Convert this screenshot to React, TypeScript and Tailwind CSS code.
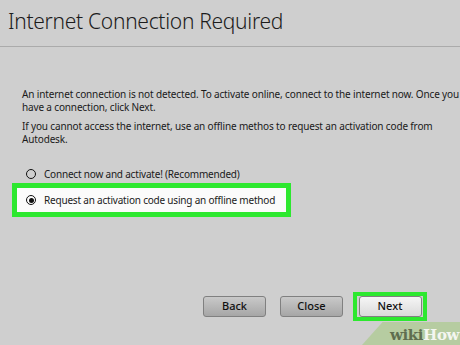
import React from 'react';

const Radio = ({ checked }: { checked?: boolean }) => (
  <span className="w-[10px] h-[10px] rounded-full border-[1.5px] border-[#111] flex items-center justify-center shrink-0">
    {checked && <span className="w-[5px] h-[5px] rounded-full bg-[#111]" />}
  </span>
);

const Button = ({ label, primary }: { label: string; primary?: boolean }) => (
  <button
    className={
      'w-[63px] h-[21px] rounded-[3px] border border-[#808080] text-[11px] font-medium text-[#111] flex items-center justify-center ' +
      (primary
        ? 'bg-gradient-to-b from-[#f6f6f6] to-[#dadada]'
        : 'bg-gradient-to-b from-[#c9c9c9] to-[#a6a6a6]')
    }
  >
    {label}
  </button>
);

export default function App() {
  return (
    <div className="w-[460px] h-[345px] bg-[#cfcfcf] relative overflow-hidden font-['Noto_Sans',sans-serif] text-[#1a1a1a]">
      <div className="h-[47px] border-b border-[#ababab] pl-[8px] pt-[7px]">
        <h1 className="text-[21px] leading-[28px] font-light tracking-[-0.3px] text-[#1c1c1c]">Internet Connection Required</h1>
      </div>

      <div className="pl-[22px] pt-[41px] text-[10px] leading-[13px] tracking-[-0.15px]">
        <p className="whitespace-nowrap">
          An internet connection is not detected. To activate online, connect to the internet now. Once you
          <br />
          have a connection, click Next.
        </p>
        <p className="whitespace-nowrap mt-[6px]">
          If you cannot access the internet, use an offline methos to request an activation code from
          <br />
          Autodesk.
        </p>
      </div>

      <div className="pl-[12px] pt-[19px] text-[10px] tracking-[-0.2px]">
        <div className="flex items-center gap-[8px] h-[18px] pl-[14px]">
          <Radio />
          <span>Connect now and activate! (Recommended)</span>
        </div>
        <div className="w-[279px] h-[34px] border-[5px] border-[#2de82f] bg-[#fbfbfb] flex items-center gap-[8px] pl-[9px] whitespace-nowrap">
          <Radio checked />
          <span>Request an activation code using an offline method</span>
        </div>
      </div>

      <div className="flex items-center justify-end pr-[33px] pt-[75px]">
        <Button label="Back" />
        <div className="ml-[14px]">
          <Button label="Close" />
        </div>
        <div className="ml-[10px] w-[74px] h-[29px] border-[4px] border-[#2de82f] flex items-center justify-center">
          <Button label="Next" primary />
        </div>
      </div>

      <div className="absolute right-0 bottom-0 w-[98px] h-[23px] bg-[#b6cca1] [clip-path:polygon(21%_0,100%_0,100%_100%,0_100%)] flex items-center justify-end pr-[1px] pt-[3px]">
        <span className="font-['DejaVu_Serif',serif] font-bold text-[15px] leading-none tracking-[-0.4px]">
          <span className="text-[#5f6e4f]">wiki</span>
          <span className="text-[#f4f6f0]">How</span>
        </span>
      </div>
    </div>
  );
}
